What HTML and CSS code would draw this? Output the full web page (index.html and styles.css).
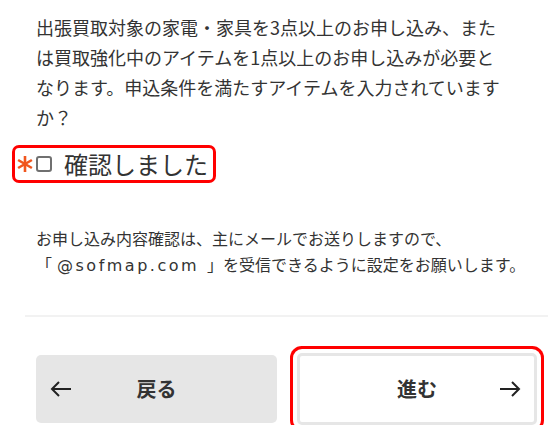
FILE: index.html
```html
<!DOCTYPE html>
<html lang="ja">
<head>
<meta charset="utf-8">
<link rel="stylesheet" href="styles.css">
</head>
<body>
<div class="page">
  <div class="content">
    <p class="lead">出張買取対象の家電・家具を3点以上のお申し込み、または買取強化中のアイテムを1点以上のお申し込みが必要となります。申込条件を満たすアイテムを入力されていますか？</p>
    <label class="confirm">
      <svg class="req" width="18" height="18" viewBox="0 0 18 18" aria-hidden="true">
        <g stroke="#f0561e" stroke-width="2.6" stroke-linecap="butt">
          <line x1="9" y1="1" x2="9" y2="17"/>
          <line x1="2.1" y1="5" x2="15.9" y2="13"/>
          <line x1="2.1" y1="13" x2="15.9" y2="5"/>
        </g>
      </svg>
      <span class="box"></span>
      <span class="confirm-text">確認しました</span>
    </label>
    <p class="note">お申し込み内容確認は、主にメールでお送りしますので、<br>「<span class="mail">@sofmap.com</span>」を受信できるように設定をお願いします。</p>
  </div>
  <hr class="divider">
  <div class="content">
    <div class="actions">
      <button class="btn btn-back" type="button">
        <svg class="arrow" width="22" height="16" viewBox="0 0 22 16" aria-hidden="true"><path d="M21 8H2M9 1L2 8l7 7" fill="none" stroke="#222" stroke-width="2"/></svg>
        <span class="btn-label">戻る</span>
        <span></span>
      </button>
      <button class="btn btn-next" type="button">
        <span></span>
        <span class="btn-label">進む</span>
        <svg class="arrow arrow-right" width="22" height="16" viewBox="0 0 22 16" aria-hidden="true"><path d="M1 8h19M13 1l7 7-7 7" fill="none" stroke="#222" stroke-width="2"/></svg>
      </button>
    </div>
  </div>
</div>
</body>
</html>
```
FILE: styles.css
```css
* { box-sizing: border-box; }
html, body { margin: 0; padding: 0; background: #fff; }
body {
  font-family: "Noto Sans CJK JP", "Noto Sans", sans-serif;
  color: #333;
}
.page {
  width: 523px;
  margin-left: 25px;
  padding-top: 12px;
}
.content {
  padding: 0 11px;
}
.lead {
  margin: 0;
  width: 474px;
  font-size: 18px;
  line-height: 30px;
}
.confirm {
  display: inline-flex;
  align-items: center;
  margin: 13px 0 0 -24px;
  height: 38px;
  padding: 0 5px 0 1px;
  border: 3px solid #f00;
  border-radius: 7px;
}
.req { display: block; }
.box {
  width: 16px;
  height: 16px;
  margin-left: 2px;
  border: 2px solid #707070;
  border-radius: 3px;
  background: #fff;
}
.confirm-text {
  margin-left: 12px;
  font-size: 24px;
  line-height: 32px;
  color: #333;
}
.note {
  margin: 42px 0 0;
  font-size: 16px;
  line-height: 26px;
}
.mail {
  font-family: "DejaVu Sans", sans-serif;
  letter-spacing: 2.5px;
  margin: 0 8px 0 5px;
}
.divider {
  margin: 36px 0 0;
  height: 2px;
  border: 0;
  background: #f2f2f2;
}
.actions {
  display: grid;
  grid-template-columns: 241px 240px;
  column-gap: 20px;
  align-items: center;
  margin-top: 36px;
}
.btn {
  display: grid;
  grid-template-columns: 1fr auto 1fr;
  align-items: center;
  padding: 0 14px;
  font-family: inherit;
  font-size: 20px;
  font-weight: 700;
  color: #333;
  cursor: pointer;
}
.btn-back {
  height: 68px;
  border: 0;
  border-radius: 5px;
  background: #e6e6e6;
}
.btn-next {
  height: 72px;
  border: 3px solid #e6e6e6;
  border-radius: 5px;
  background: #fff;
  padding: 0 13px;
  box-shadow: 0 0 0 4px #fff, 0 0 0 7px #f00;
}
.btn-label { line-height: 28px; }
.arrow { display: block; }
.arrow-right { justify-self: end; }
```
